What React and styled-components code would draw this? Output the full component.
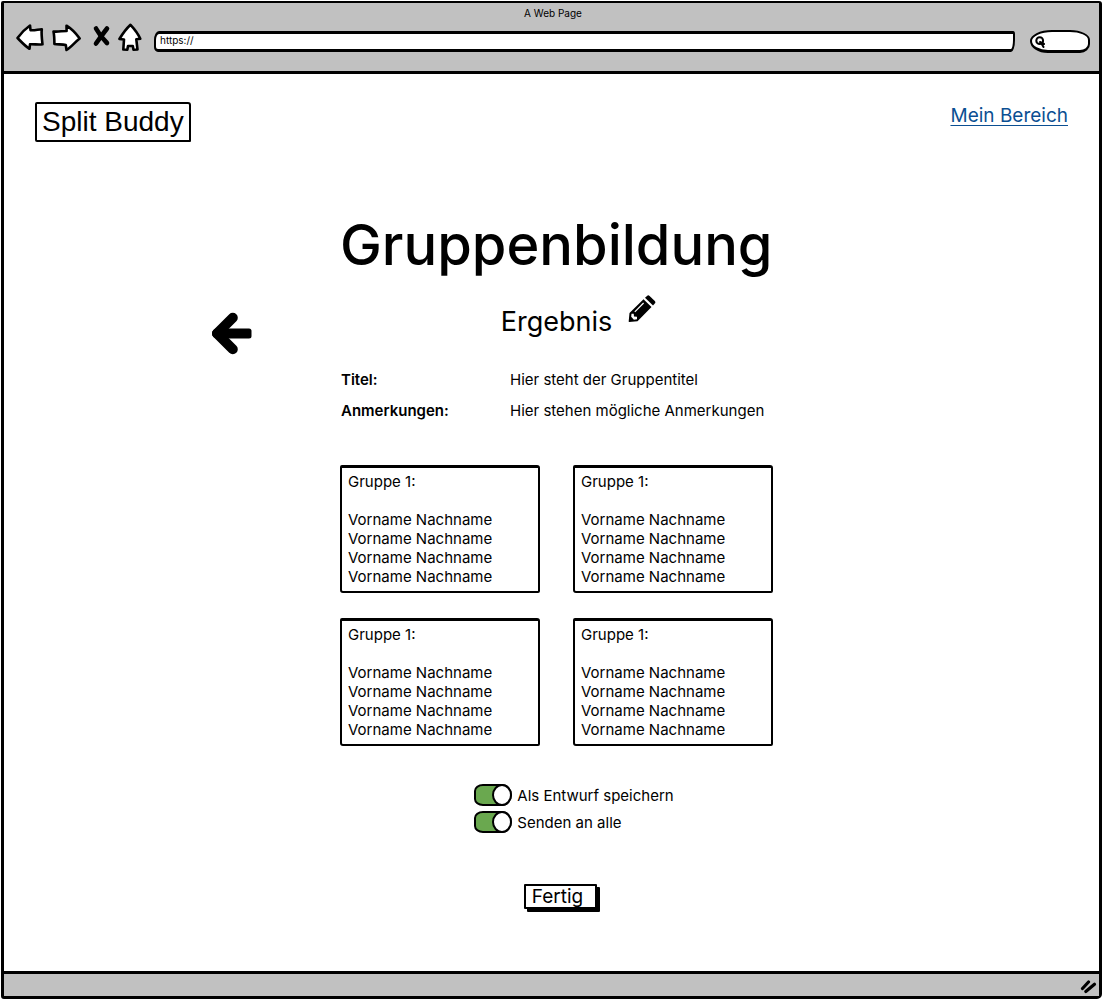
import React, { useState } from "react";
import styled, { createGlobalStyle } from "styled-components";

const GlobalStyle = createGlobalStyle`
  *, *::before, *::after { box-sizing: border-box; }
  body {
    margin: 0;
    background: #fff;
    color: #000;
    font-family: Inter, "Liberation Sans", sans-serif;
    font-size: 15px;
    line-height: 19px;
  }
  h1, h2, h3, p, dl, dd, dt, ul { margin: 0; padding: 0; font-weight: 400; }
`;

const Frame = styled.div`
  min-height: 100vh;
  padding: 1px;
  display: flex;
`;

const BrowserWindow = styled.div`
  flex: 1;
  min-width: 0;
  display: flex;
  flex-direction: column;
  border: 3px solid #000;
  border-top-width: 2px;
  border-radius: 2px 3px 5px 3px;
`;

const Chrome = styled.header`
  background: #c1c1c1;
  border-bottom: 3px solid #000;
  padding: 3px 9px 15px 12px;
`;

const PageTitle = styled.p`
  text-align: center;
  font-size: 10px;
  line-height: 14px;
`;

const Toolbar = styled.div`
  display: flex;
  align-items: center;
  gap: 10px;
  height: 36px;
`;

const ToolButton = styled.button`
  width: ${(p) => p.$width}px;
  height: 30px;
  padding: 0;
  border: 0;
  background: none;
  color: #000;
  flex: none;
  svg { display: block; overflow: visible; }
`;

const AddressBar = styled.input`
  flex: 1;
  min-width: 0;
  height: 21px;
  margin: 6px 5px 0 0;
  padding: 0 4px 2px;
  border: 3px solid #000;
  border-right-width: 2px;
  border-left-width: 2px;
  border-radius: 5px 2px 4px 4px / 9px 3px 12px 5px;
  background: #fff;
  font: 10px Inter, "Liberation Sans", sans-serif;
  color: #000;
`;

const SearchBox = styled.label`
  width: 60px;
  height: 23px;
  margin-top: 6px;
  padding-left: 3px;
  display: flex;
  align-items: center;
  border: 2px solid #000;
  border-bottom-width: 3px;
  border-radius: 22px 20px 10px 18px / 11px 10px 9px 12px;
  background: #fff;
  svg { flex: none; }
`;

const SearchInput = styled.input`
  width: 100%;
  min-width: 0;
  padding: 0 4px;
  border: 0;
  outline: 0;
  background: none;
  font: inherit;
  font-size: 10px;
`;

const Page = styled.div`
  flex: 1;
  padding: 28px 31px 48px;
`;

const PageHeader = styled.div`
  display: flex;
  justify-content: space-between;
  align-items: flex-start;
  margin-bottom: 66px;
`;

const Brand = styled.div`
  padding: 0 5px;
  border: 2px solid #000;
  border-radius: 2px 3px 1px 2px;
  font: 28px/36px "Liberation Sans", Arial, sans-serif;
`;

const AreaLink = styled.a`
  color: #0b4f92;
  font-size: 19px;
  line-height: 28px;
  text-decoration-thickness: 1px;
  text-underline-offset: 3px;
`;

const Main = styled.main`
  display: grid;
  grid-template-columns: 1fr 433px 1fr;
  padding-left: 10px;
`;

const Column = styled.div`
  grid-column: 2;
  display: flex;
  flex-direction: column;
`;

const BackButton = styled.button`
  justify-self: end;
  align-self: start;
  margin: 104px 88px 0 0;
  padding: 0;
  border: 0;
  background: none;
  color: #000;
  svg { display: block; }
`;

const Title = styled.h1`
  font-size: 56px;
  line-height: 74px;
  font-weight: 500;
  white-space: nowrap;
`;

const Subtitle = styled.div`
  display: flex;
  justify-content: center;
  gap: 16px;
  margin: 13px 0 21px;
  padding-left: 44px;
  h2 { font-size: 27px; line-height: 54px; }
`;

const EditButton = styled.button`
  align-self: flex-start;
  padding: 0;
  border: 0;
  background: none;
  color: #000;
  svg { display: block; }
`;

const Details = styled.dl`
  display: grid;
  grid-template-columns: 169px 1fr;
  row-gap: 12px;
  margin-bottom: 45px;
  padding-left: 1px;
  dt { font-weight: 600; }
  dd { white-space: nowrap; }
`;

const Groups = styled.div`
  display: grid;
  grid-template-columns: 1fr 1fr;
  gap: 25px 33px;
`;

const GroupCard = styled.section`
  padding: 4px 6px 5px;
  border: 2px solid #000;
  border-top-width: 3px;
  border-radius: 2px 3px 2px 3px;
  h3 { font-size: 15px; margin-bottom: 19px; }
  ul { list-style: none; }
`;

const Options = styled.div`
  display: flex;
  flex-direction: column;
  align-self: center;
  gap: 5px;
  margin: 38px 0 51px;
  padding-left: 35px;
`;

const Option = styled.label`
  display: flex;
  align-items: center;
  gap: 5px;
`;

const Switch = styled.input`
  appearance: none;
  position: relative;
  flex: none;
  width: 38px;
  height: 22px;
  margin: 0;
  border: 2px solid #000;
  border-radius: 9px 10px 10px 9px / 7px 11px 11px 7px;
  background: ${(p) => (p.checked ? "#6aa84f" : "#c1c1c1")};
  &::before {
    content: "";
    position: absolute;
    top: -2px;
    left: ${(p) => (p.checked ? "16px" : "-2px")};
    width: 20px;
    height: 22px;
    border: 2px solid #000;
    border-radius: 50%;
    background: #fff;
  }
`;

const DoneButton = styled.button`
  align-self: center;
  margin-left: 8px;
  padding: 1px 12px 0 6px;
  border: 2px solid #000;
  border-radius: 1px;
  box-shadow: 3px 3px 0 #000;
  background: #fff;
  color: #000;
  font: 19px/20px Inter, "Liberation Sans", sans-serif;
`;

const StatusBar = styled.footer`
  height: 25px;
  padding: 6px 2px 0;
  display: flex;
  justify-content: flex-end;
  border-top: 3px solid #000;
  background: #c1c1c1;
`;

const outline = { fill: "#fff", stroke: "#000", strokeWidth: 2.6, strokeLinejoin: "round", strokeLinecap: "round" };

const BackIcon = () => (
  <svg width="28" height="30" viewBox="0 0 28 30" {...outline}>
    <path d="M1.5 15 C5 10 9 6 14 2.5 L14.5 7.2 C18 7.8 22 6.4 25.8 6.2 C25.2 11 26 17 26.5 21.3 C23 22 18 21 14 21.3 L13.5 25.8 C9 23 5 18.5 1.5 15Z" />
  </svg>
);
const ForwardIcon = () => (
  <svg width="28" height="30" viewBox="2 0 28 30" {...outline}>
    <path d="M1.5 8.5 C6 9 10 8 14.6 8 L14.5 2.7 C20 6 24 10.5 27.7 15.5 C23 19 19.5 24 14.5 27 L13.8 22 C10 20.8 6 21.8 2.4 21 C2.4 17 2.4 13 1.5 8.5Z" />
  </svg>
);
const StopIcon = () => (
  <svg width="18" height="30" viewBox="0 1 18 30" fill="none" stroke="#000" strokeLinecap="round">
    <path d="M4 6.5 Q8 14 15 21" strokeWidth="4.6" />
    <path d="M15 6.5 Q10 13 4 21.5" strokeWidth="4.6" />
  </svg>
);
const HomeIcon = () => (
  <svg width="24" height="30" viewBox="2 0 24 30" {...outline}>
    <path d="M12.5 1.8 C16 5.5 20 10.5 22.3 15.8 L18.3 16.3 L19.5 26.5 L15.5 26.8 L14.8 23 L10 23 L9.3 26.8 L5.3 26.5 L6 16.5 L1.4 16 C4.5 11 8 6 12.5 1.8Z" />
  </svg>
);
const SearchIcon = () => (
  <svg width="10" height="14" viewBox="0 -2 10 14" fill="none" stroke="#000" strokeWidth="2" strokeLinecap="round">
    <circle cx="4.7" cy="4.7" r="3.4" />
    <path d="M5 6 L9 8 M6.5 7.5 L8.5 11" />
  </svg>
);
const ArrowIcon = () => (
  <svg width="40" height="43" viewBox="0 0 40 43" fill="none" stroke="#000" strokeLinejoin="round" strokeLinecap="round">
    <path d="M20.8 5.7 L5 21.5 L20.8 37.3" strokeWidth="10" />
    <path d="M5 21.5 L14 21.5" strokeWidth="10" />
    <rect x="10" y="16.5" width="29.5" height="10" rx="2.5" fill="#000" stroke="none" />
  </svg>
);
const PencilIcon = () => (
  <svg width="28" height="28" viewBox="0 0 28 28">
    <path d="M1.5 18 L15.5 4.2 L23.5 12 L9.5 26.2 L1.2 27 Q0.5 27 0.7 26.2Z" />
    <path d="M17 2.7 L19 0.9 Q20.3 -0.2 21.6 0.9 L26.8 6 Q28 7.3 26.8 8.6 L25 10.5Z" />
    <path d="M3.5 18.8 L3.2 21.8 L5.9 24.7 L9 24.2 L9 21.8 L6 21.6 L5.7 18.7Z" fill="#fff" />
    <path d="M6.8 16.8 L15.6 8" stroke="#fff" strokeWidth="1.2" />
  </svg>
);
const ResizeIcon = () => (
  <svg width="17" height="14" viewBox="0 0 17 14" fill="none" stroke="#000" strokeWidth="3.2" strokeLinecap="round">
    <path d="M2.5 8.5 L8.5 2" />
    <path d="M5.8 11.5 L14.5 4.2" />
  </svg>
);

const members = Array(4).fill("Vorname Nachname");
const groups = Array(4).fill("Gruppe 1:");

export default function App() {
  const [draft, setDraft] = useState(true);
  const [sendAll, setSendAll] = useState(true);

  return (
    <Frame>
      <GlobalStyle />
      <BrowserWindow>
        <Chrome>
          <PageTitle>A Web Page</PageTitle>
          <Toolbar>
            <ToolButton $width={28} aria-label="Zurück"><BackIcon /></ToolButton>
            <ToolButton $width={28} aria-label="Vorwärts"><ForwardIcon /></ToolButton>
            <ToolButton $width={18} aria-label="Stopp"><StopIcon /></ToolButton>
            <ToolButton $width={24} aria-label="Startseite"><HomeIcon /></ToolButton>
            <AddressBar aria-label="Adresse" defaultValue="https://" />
            <SearchBox>
              <SearchIcon />
              <SearchInput aria-label="Suche" />
            </SearchBox>
          </Toolbar>
        </Chrome>
        <Page>
          <PageHeader>
            <Brand>Split Buddy</Brand>
            <AreaLink href="#bereich">Mein Bereich</AreaLink>
          </PageHeader>
          <Main>
            <BackButton aria-label="Zurück"><ArrowIcon /></BackButton>
            <Column>
              <Title>Gruppenbildung</Title>
              <Subtitle>
                <h2>Ergebnis</h2>
                <EditButton aria-label="Bearbeiten"><PencilIcon /></EditButton>
              </Subtitle>
              <Details>
                <dt>Titel:</dt>
                <dd>Hier steht der Gruppentitel</dd>
                <dt>Anmerkungen:</dt>
                <dd>Hier stehen mögliche Anmerkungen</dd>
              </Details>
              <Groups>
                {groups.map((name, i) => (
                  <GroupCard key={i}>
                    <h3>{name}</h3>
                    <ul>
                      {members.map((member, j) => <li key={j}>{member}</li>)}
                    </ul>
                  </GroupCard>
                ))}
              </Groups>
              <Options>
                <Option>
                  <Switch type="checkbox" checked={draft} onChange={(e) => setDraft(e.target.checked)} />
                  Als Entwurf speichern
                </Option>
                <Option>
                  <Switch type="checkbox" checked={sendAll} onChange={(e) => setSendAll(e.target.checked)} />
                  Senden an alle
                </Option>
              </Options>
              <DoneButton>Fertig</DoneButton>
            </Column>
          </Main>
        </Page>
        <StatusBar><ResizeIcon /></StatusBar>
      </BrowserWindow>
    </Frame>
  );
}
